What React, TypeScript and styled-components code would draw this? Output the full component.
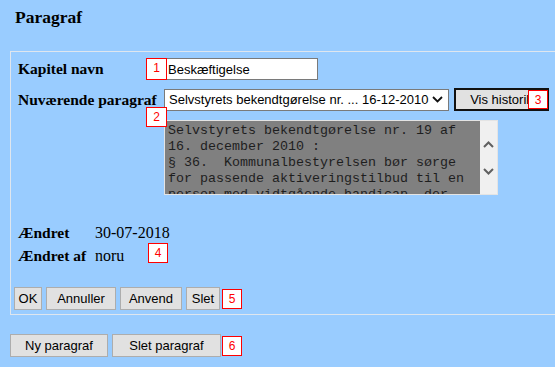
import styled, { createGlobalStyle } from "styled-components";

const GlobalStyle = createGlobalStyle`
  html, body {
    margin: 0;
    padding: 0;
    overflow: hidden;
    background: #99ccff;
  }
  body {
    font-family: "Liberation Serif", "Times New Roman", serif;
    color: #000;
  }
`;

const Page = styled.div`
  width: 555px;
  height: 367px;
  box-sizing: border-box;
  padding: 8px 0 0 10px;
  overflow: hidden;
`;

const Title = styled.h1`
  margin: 0 0 24px 5px;
  font-size: 17.5px;
  font-weight: bold;
  line-height: 19px;
`;

const Panel = styled.div`
  width: 560px;
  border: 1px solid #dfe6ee;
  padding: 6px 0 4px 3px;
`;

const FieldGrid = styled.div`
  display: grid;
  grid-template-columns: 146px auto;
  row-gap: 9px;
  align-items: center;
  padding-left: 4px;
  & > :nth-child(4) {
    margin-top: -1px;
  }
`;

const Label = styled.div`
  font-size: 15.5px;
  font-weight: bold;
  white-space: nowrap;
`;

const Cell = styled.div`
  display: flex;
  align-items: center;
  gap: 5px;
`;

const Anchor = styled.span`
  position: relative;
  display: inline-flex;
`;

const Badge = styled.span<{ $left?: number; $top?: number; $w?: number; $h?: number }>`
  ${(p) => (p.$left !== undefined ? `position: absolute; left: ${p.$left}px; top: ${p.$top}px;` : "")}
  box-sizing: border-box;
  width: ${(p) => p.$w ?? 20}px;
  height: ${(p) => p.$h ?? 20}px;
  border: 1px solid #ff0000;
  background: #fff;
  color: #ff0000;
  font-family: "Liberation Sans", Arial, sans-serif;
  font-size: 12px;
  line-height: 16px;
  text-align: center;
  padding-top: 1px;
  z-index: 2;
`;

const TextInput = styled.input`
  box-sizing: border-box;
  width: 153px;
  height: 22px;
  margin: 0 0 0 1px;
  padding: 0 2px;
  border: 1px solid #7a7a7a;
  background: #fff;
  font-family: "Liberation Sans", Arial, sans-serif;
  font-size: 13px;
  color: #000;
  outline: none;
`;

const Select = styled.select`
  appearance: none;
  box-sizing: border-box;
  width: 285px;
  height: 22px;
  margin: 0;
  padding: 0 0 0 4px;
  border: 1px solid #7a7a7a;
  border-radius: 0;
  background: #fff;
  font-family: "Liberation Sans", Arial, sans-serif;
  font-size: 13px;
  color: #000;
  outline: none;
`;

const Chevron = styled.svg`
  position: absolute;
  right: 6px;
  top: 7px;
  pointer-events: none;
`;

const Button = styled.button<{ $w: number; $focus?: boolean }>`
  box-sizing: border-box;
  width: ${(p) => p.$w}px;
  height: 23px;
  margin: 0;
  padding: 0;
  border: ${(p) => (p.$focus ? "2px solid #111" : "1px solid #adadad")};
  border-radius: 0;
  background: #e1e1e1;
  font-family: "Liberation Sans", Arial, sans-serif;
  font-size: 13px;
  color: #000;
  white-space: nowrap;
  overflow: hidden;
`;

const TextBox = styled.div`
  display: flex;
  width: 334px;
  height: 75px;
  box-sizing: border-box;
  border: 1px solid #e4e4e4;
  box-shadow: inset 1px 1px 0 #9a9a9a;
`;

const TextBody = styled.div`
  flex: 1;
  padding: 2px 3px;
  background: #808080;
  overflow: hidden;
  white-space: pre-wrap;
  font-family: "Liberation Mono", "Courier New", monospace;
  font-size: 13.33px;
  line-height: 16px;
  color: #1e1e1e;
`;

const ScrollCol = styled.div`
  width: 17px;
  background: #f0f0f0;
  display: flex;
  flex-direction: column;
  align-items: center;
  justify-content: center;
  gap: 20px;
`;

const InfoGrid = styled.div`
  position: relative;
  display: grid;
  grid-template-columns: 77px auto;
  grid-auto-rows: 23px;
  align-items: center;
  margin-top: 26px;
  padding-left: 4px;
`;

const Value = styled.div`
  font-size: 16px;
  line-height: 23px;
`;

const ButtonRow = styled.div<{ $mt: number }>`
  display: flex;
  align-items: center;
  gap: 4px;
  margin-top: ${(p) => p.$mt}px;
`;

const paragraphText =
  "Selvstyrets bekendtgørelse nr. 19 af 16. december 2010 :\n§ 36.  Kommunalbestyrelsen bør sørge for passende aktiveringstilbud til en person med vidtgående handicap, der ikke kan deltage i andre tilbud.";

function ChevronIcon({ up }: { up?: boolean }) {
  return (
    <svg width="11" height="8" viewBox="0 0 11 8">
      <polyline
        points={up ? "1,7 5.5,2.5 10,7" : "1,1 5.5,5.5 10,1"}
        fill="none"
        stroke="#606060"
        strokeWidth="2"
      />
    </svg>
  );
}

export default function App() {
  return (
    <>
      <GlobalStyle />
      <Page>
        <Title>Paragraf</Title>
        <Panel>
          <FieldGrid>
            <Label>Kapitel navn</Label>
            <Cell>
              <Anchor>
                <Badge $left={-18} $top={0} $w={21} $h={22}>1</Badge>
                <TextInput defaultValue="Beskæftigelse" />
              </Anchor>
            </Cell>
            <Label>Nuværende paragraf</Label>
            <Cell>
              <Anchor>
                <Select defaultValue="1">
                  <option value="1">Selvstyrets bekendtgørelse nr. ... 16-12-2010</option>
                </Select>
                <Chevron width="11" height="7" viewBox="0 0 11 7">
                  <polyline points="1,1 5.5,5.5 10,1" fill="none" stroke="#111" strokeWidth="1.8" />
                </Chevron>
                <Badge $left={-18} $top={18} $w={21} $h={20}>2</Badge>
              </Anchor>
              <Anchor>
                <Button $w={95} $focus>Vis historik</Button>
                <Badge $left={74} $top={2} $w={20} $h={19}>3</Badge>
              </Anchor>
            </Cell>
            <div />
            <Cell>
              <TextBox>
                <TextBody>{paragraphText}</TextBody>
                <ScrollCol>
                  <ChevronIcon up />
                  <ChevronIcon />
                </ScrollCol>
              </TextBox>
            </Cell>
          </FieldGrid>

          <InfoGrid>
            <Label>Ændret</Label>
            <Value>30-07-2018</Value>
            <Label>Ændret af</Label>
            <Value>noru</Value>
            <Badge $left={134} $top={22} $w={20} $h={20}>4</Badge>
          </InfoGrid>

          <ButtonRow $mt={20}>
            <Button $w={28}>OK</Button>
            <Button $w={70}>Annuller</Button>
            <Button $w={62}>Anvend</Button>
            <Button $w={34}>Slet</Button>
            <Badge $w={20} $h={20} style={{ marginLeft: -2 }}>5</Badge>
          </ButtonRow>
        </Panel>

        <ButtonRow $mt={19}>
          <Button $w={98}>Ny paragraf</Button>
          <Button $w={109}>Slet paragraf</Button>
          <Badge $w={20} $h={20} style={{ marginLeft: -3 }}>6</Badge>
        </ButtonRow>
      </Page>
    </>
  );
}
